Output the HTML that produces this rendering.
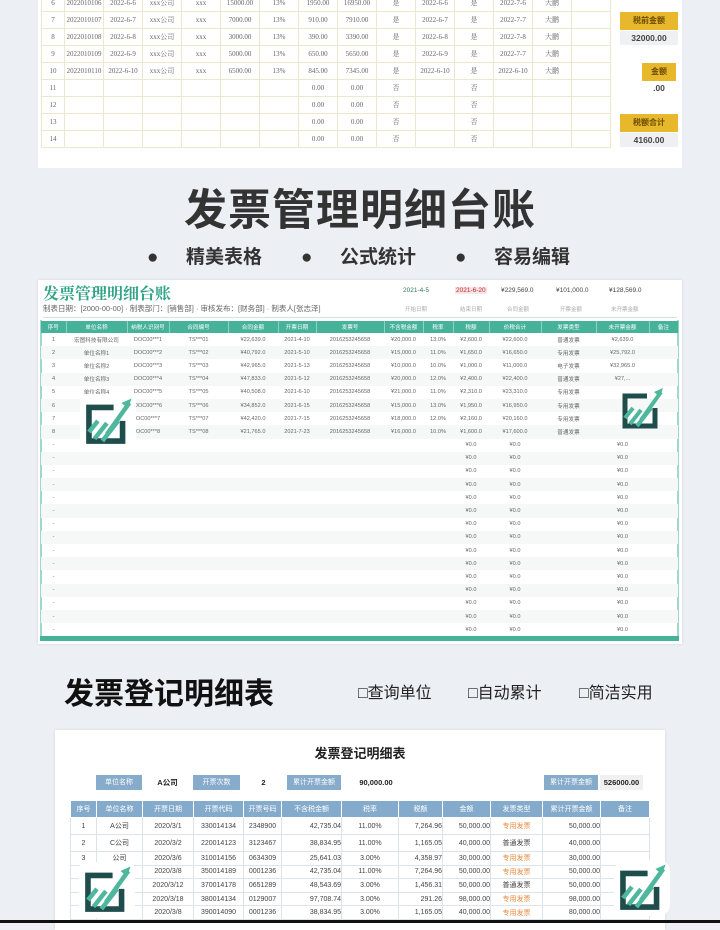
<!DOCTYPE html>
<html><head><meta charset="utf-8">
<style>
*{margin:0;padding:0;box-sizing:border-box}
body{width:720px;height:923px;overflow:hidden;background:#eceff3;font-family:"Liberation Sans","Noto Sans CJK SC",sans-serif;position:relative;color:#555}
.abs{position:absolute;white-space:nowrap}
table{border-collapse:collapse;table-layout:fixed;position:absolute}
td{overflow:hidden;white-space:nowrap;text-align:center}
.t1 td{height:17px;border:1px solid #ece8cf;font-size:7px;color:#666;font-family:"Liberation Serif","Noto Serif CJK SC",serif}
.t2 td{height:13.2px;font-size:5.6px;color:#666}
.t2 tr.h td{background:#46b29a;color:#fff;height:12px;border-right:1px solid #8fd3c5}
.t2 tr:nth-child(odd):not(.h) td{background:#f6f7f7}
.t3 td{font-size:7px;color:#444;border:1px solid #dde3ea;height:13.6px}
.t3 tr.h td{background:#85abcc;color:#fff;height:17px;border-color:#fff}
.t3 tr.r1 td{height:17px}
.t3 td.or{color:#e7893b}
.ylab{background:#e8b82c;color:#6a4b00;font-size:8px;font-weight:bold;text-align:center;line-height:18px}
.bl{background:#86abcb;color:#fff;font-size:7px;text-align:center;line-height:15px}
</style></head><body>

<div class="abs" style="left:38px;top:0;width:644px;height:168px;background:#fff"></div>
<table class="t1" style="left:41px;top:-6px;width:570px">
<colgroup><col style="width:23px"><col style="width:39px"><col style="width:39px"><col style="width:39px"><col style="width:39px"><col style="width:39px"><col style="width:39px"><col style="width:39px"><col style="width:39px"><col style="width:39px"><col style="width:39px"><col style="width:39px"><col style="width:39px"><col style="width:39px"><col style="width:39px"></colgroup>
<tr><td>6</td><td>2022010106</td><td>2022-6-6</td><td>xxx公司</td><td>xxx</td><td>15000.00</td><td>13%</td><td>1950.00</td><td>16950.00</td><td>是</td><td>2022-6-6</td><td>是</td><td>2022-7-6</td><td>大鹏</td><td></td></tr>
<tr><td>7</td><td>2022010107</td><td>2022-6-7</td><td>xxx公司</td><td>xxx</td><td>7000.00</td><td>13%</td><td>910.00</td><td>7910.00</td><td>是</td><td>2022-6-7</td><td>是</td><td>2022-7-7</td><td>大鹏</td><td></td></tr>
<tr><td>8</td><td>2022010108</td><td>2022-6-8</td><td>xxx公司</td><td>xxx</td><td>3000.00</td><td>13%</td><td>390.00</td><td>3390.00</td><td>是</td><td>2022-6-8</td><td>是</td><td>2022-7-8</td><td>大鹏</td><td></td></tr>
<tr><td>9</td><td>2022010109</td><td>2022-6-9</td><td>xxx公司</td><td>xxx</td><td>5000.00</td><td>13%</td><td>650.00</td><td>5650.00</td><td>是</td><td>2022-6-9</td><td>是</td><td>2022-7-7</td><td>大鹏</td><td></td></tr>
<tr><td>10</td><td>2022010110</td><td>2022-6-10</td><td>xxx公司</td><td>xxx</td><td>6500.00</td><td>13%</td><td>845.00</td><td>7345.00</td><td>是</td><td>2022-6-10</td><td>是</td><td>2022-6-10</td><td>大鹏</td><td></td></tr>
<tr><td>11</td><td></td><td></td><td></td><td></td><td></td><td></td><td>0.00</td><td>0.00</td><td>否</td><td></td><td>否</td><td></td><td></td><td></td></tr>
<tr><td>12</td><td></td><td></td><td></td><td></td><td></td><td></td><td>0.00</td><td>0.00</td><td>否</td><td></td><td>否</td><td></td><td></td><td></td></tr>
<tr><td>13</td><td></td><td></td><td></td><td></td><td></td><td></td><td>0.00</td><td>0.00</td><td>否</td><td></td><td>否</td><td></td><td></td><td></td></tr>
<tr><td>14</td><td></td><td></td><td></td><td></td><td></td><td></td><td>0.00</td><td>0.00</td><td>否</td><td></td><td>否</td><td></td><td></td><td></td></tr>
</table>
<div class="abs ylab" style="left:620px;top:12px;width:58px">税前金额</div>
<div class="abs" style="left:620px;top:31px;width:58px;height:14px;background:#eef0f2;font-size:8.5px;font-weight:bold;text-align:center;line-height:14px;color:#444">32000.00</div>
<div class="abs ylab" style="left:642px;top:63px;width:34px">金额</div>
<div class="abs" style="left:642px;top:83px;width:34px;font-size:8.5px;font-weight:bold;text-align:center;color:#444">.00</div>
<div class="abs ylab" style="left:620px;top:114px;width:58px">税额合计</div>
<div class="abs" style="left:620px;top:133px;width:58px;height:14px;background:#eef0f2;font-size:8.5px;font-weight:bold;text-align:center;line-height:14px;color:#444">4160.00</div>

<div class="abs" style="left:0;top:186px;width:720px;text-align:center;font-size:43px;font-weight:bold;color:#333;letter-spacing:1px;line-height:50px">发票管理明细台账</div>
<div class="abs" style="left:0;top:246px;width:720px;font-size:19px;font-weight:bold;color:#333;line-height:24px">
<span class="abs" style="left:147px">●</span><span class="abs" style="left:186px">精美表格</span>
<span class="abs" style="left:301px">●</span><span class="abs" style="left:340px">公式统计</span>
<span class="abs" style="left:455px">●</span><span class="abs" style="left:494px">容易编辑</span>
</div>

<div class="abs" style="left:38px;top:280px;width:644px;height:364px;background:#fff;box-shadow:0 0 3px rgba(0,0,0,.1)"></div>
<div class="abs" style="left:43px;top:283px;font-size:16px;font-weight:bold;color:#2fa487;font-family:'Noto Serif CJK SC',serif;line-height:20px">发票管理明细台账</div>
<div class="abs" style="left:43px;top:303px;font-size:7.5px;color:#666">制表日期：[2000-00-00] · 制表部门：[销售部] · 审核发布：[财务部] · 制表人[张志泽]</div>
<div class="abs" style="top:287px;left:0;width:720px;font-size:6.5px;color:#2a7a56">
<span class="abs" style="left:403px">2021-4-5</span>
<span class="abs" style="left:455px;color:#c4282b;background:#f7e4e4;padding:0 1px">2021-6-20</span>
<span class="abs" style="left:501px;color:#444">¥229,569.0</span>
<span class="abs" style="left:556px;color:#444">¥101,000.0</span>
<span class="abs" style="left:609px;color:#444">¥128,569.0</span>
</div>
<div class="abs" style="top:305px;left:0;width:720px;font-size:5.5px;color:#aaa">
<span class="abs" style="left:405px">开始日期</span><span class="abs" style="left:460px">结束日期</span><span class="abs" style="left:507px">合同金额</span><span class="abs" style="left:560px">开票金额</span><span class="abs" style="left:611px">未开票金额</span>
</div>
<div class="abs" style="left:43px;top:317px;width:634px;height:1px;background:#cfe7e1"></div>
<div class="abs" style="left:40px;top:320px;width:2px;height:320px;background:#9fd9cc"></div>
<div class="abs" style="left:677px;top:320px;width:2px;height:320px;background:#9fd9cc"></div>
<table class="t2" style="left:41px;top:321px;width:637px">
<colgroup><col style="width:25px"><col style="width:61px"><col style="width:42px"><col style="width:59px"><col style="width:50px"><col style="width:38px"><col style="width:68px"><col style="width:39px"><col style="width:30px"><col style="width:36px"><col style="width:52px"><col style="width:55px"><col style="width:53px"><col style="width:29px"></colgroup>
<tr class="h"><td>序号</td><td>单位名称</td><td>纳税人识别号</td><td>合同编号</td><td>合同金额</td><td>开票日期</td><td>发票号</td><td>不含税金额</td><td>税率</td><td>税额</td><td>价税合计</td><td>发票类型</td><td>未开票金额</td><td>备注</td></tr>
<tr><td>1</td><td>宏图科技有限公司</td><td>DOC00***1</td><td>TS***01</td><td>¥22,639.0</td><td>2021-4-10</td><td>2016253245658</td><td>¥20,000.0</td><td>13.0%</td><td>¥2,600.0</td><td>¥22,600.0</td><td>普通发票</td><td>¥2,639.0</td><td></td></tr>
<tr><td>2</td><td>单位名称1</td><td>DOC00***2</td><td>TS***02</td><td>¥40,792.0</td><td>2021-5-10</td><td>2016253245658</td><td>¥15,000.0</td><td>11.0%</td><td>¥1,650.0</td><td>¥16,650.0</td><td>专用发票</td><td>¥25,792.0</td><td></td></tr>
<tr><td>3</td><td>单位名称2</td><td>DOC00***3</td><td>TS***03</td><td>¥42,965.0</td><td>2021-5-13</td><td>2016253245658</td><td>¥10,000.0</td><td>10.0%</td><td>¥1,000.0</td><td>¥11,000.0</td><td>电子发票</td><td>¥32,965.0</td><td></td></tr>
<tr><td>4</td><td>单位名称3</td><td>DOC00***4</td><td>TS***04</td><td>¥47,833.0</td><td>2021-5-12</td><td>2016253245658</td><td>¥20,000.0</td><td>12.0%</td><td>¥2,400.0</td><td>¥22,400.0</td><td>普通发票</td><td>¥27,...</td><td></td></tr>
<tr><td>5</td><td>单位名称4</td><td>DOC00***5</td><td>TS***05</td><td>¥40,508.0</td><td>2021-6-10</td><td>2016253245658</td><td>¥21,000.0</td><td>11.0%</td><td>¥2,310.0</td><td>¥23,310.0</td><td>专用发票</td><td></td><td></td></tr>
<tr><td>6</td><td></td><td>DOC00***6</td><td>TS***06</td><td>¥34,852.0</td><td>2021-6-15</td><td>2016253245658</td><td>¥15,000.0</td><td>13.0%</td><td>¥1,950.0</td><td>¥16,950.0</td><td>专用发票</td><td></td><td></td></tr>
<tr><td>7</td><td></td><td>OC00***7</td><td>TS***07</td><td>¥42,420.0</td><td>2021-7-15</td><td>2016253245658</td><td>¥18,000.0</td><td>12.0%</td><td>¥2,160.0</td><td>¥20,160.0</td><td>专用发票</td><td></td><td></td></tr>
<tr><td>8</td><td></td><td>OC00***8</td><td>TS***08</td><td>¥21,765.0</td><td>2021-7-23</td><td>2016253245658</td><td>¥16,000.0</td><td>10.0%</td><td>¥1,600.0</td><td>¥17,600.0</td><td>普通发票</td><td></td><td></td></tr>
<tr><td>-</td><td></td><td></td><td></td><td></td><td></td><td></td><td></td><td></td><td>¥0.0</td><td>¥0.0</td><td></td><td>¥0.0</td><td></td></tr>
<tr><td>-</td><td></td><td></td><td></td><td></td><td></td><td></td><td></td><td></td><td>¥0.0</td><td>¥0.0</td><td></td><td>¥0.0</td><td></td></tr>
<tr><td>-</td><td></td><td></td><td></td><td></td><td></td><td></td><td></td><td></td><td>¥0.0</td><td>¥0.0</td><td></td><td>¥0.0</td><td></td></tr>
<tr><td>-</td><td></td><td></td><td></td><td></td><td></td><td></td><td></td><td></td><td>¥0.0</td><td>¥0.0</td><td></td><td>¥0.0</td><td></td></tr>
<tr><td>-</td><td></td><td></td><td></td><td></td><td></td><td></td><td></td><td></td><td>¥0.0</td><td>¥0.0</td><td></td><td>¥0.0</td><td></td></tr>
<tr><td>-</td><td></td><td></td><td></td><td></td><td></td><td></td><td></td><td></td><td>¥0.0</td><td>¥0.0</td><td></td><td>¥0.0</td><td></td></tr>
<tr><td>-</td><td></td><td></td><td></td><td></td><td></td><td></td><td></td><td></td><td>¥0.0</td><td>¥0.0</td><td></td><td>¥0.0</td><td></td></tr>
<tr><td>-</td><td></td><td></td><td></td><td></td><td></td><td></td><td></td><td></td><td>¥0.0</td><td>¥0.0</td><td></td><td>¥0.0</td><td></td></tr>
<tr><td>-</td><td></td><td></td><td></td><td></td><td></td><td></td><td></td><td></td><td>¥0.0</td><td>¥0.0</td><td></td><td>¥0.0</td><td></td></tr>
<tr><td>-</td><td></td><td></td><td></td><td></td><td></td><td></td><td></td><td></td><td>¥0.0</td><td>¥0.0</td><td></td><td>¥0.0</td><td></td></tr>
<tr><td>-</td><td></td><td></td><td></td><td></td><td></td><td></td><td></td><td></td><td>¥0.0</td><td>¥0.0</td><td></td><td>¥0.0</td><td></td></tr>
<tr><td>-</td><td></td><td></td><td></td><td></td><td></td><td></td><td></td><td></td><td>¥0.0</td><td>¥0.0</td><td></td><td>¥0.0</td><td></td></tr>
<tr><td>-</td><td></td><td></td><td></td><td></td><td></td><td></td><td></td><td></td><td>¥0.0</td><td>¥0.0</td><td></td><td>¥0.0</td><td></td></tr>
<tr><td>-</td><td></td><td></td><td></td><td></td><td></td><td></td><td></td><td></td><td>¥0.0</td><td>¥0.0</td><td></td><td>¥0.0</td><td></td></tr>
<tr><td>-</td><td></td><td></td><td></td><td></td><td></td><td></td><td></td><td></td><td>¥0.0</td><td>¥0.0</td><td></td><td>¥0.0</td><td></td></tr>
</table>
<div class="abs" style="left:40px;top:636px;width:639px;height:5px;background:#46b29a"></div>

<svg class="abs" style="left:80px;top:394px" width="56" height="56" viewBox="0 0 50 50"><rect x="0" y="0" width="50" height="50" rx="6" fill="#fff" opacity=".9"/><path d="M30 12H8v30h30V24" fill="none" stroke="#1e4d4b" stroke-width="5"/><path d="M8 34l8-10M13 40l11-14M20 42l14-18" stroke="#4fb79d" stroke-width="4"/><path d="M24 36L44 8" stroke="#4fb79d" stroke-width="4"/><path d="M46 4l-9 4 6 5z" fill="#4fb79d"/></svg>
<svg class="abs" style="left:616px;top:384px" width="52" height="50" viewBox="0 0 50 50"><path d="M30 12H8v30h30V24" fill="none" stroke="#1e4d4b" stroke-width="5"/><path d="M8 34l8-10M13 40l11-14M20 42l14-18" stroke="#4fb79d" stroke-width="4"/><path d="M24 36L44 8" stroke="#4fb79d" stroke-width="4"/><path d="M46 4l-9 4 6 5z" fill="#4fb79d"/></svg>

<div class="abs" style="left:64px;top:676px;font-size:30px;font-weight:bold;color:#111;line-height:38px">发票登记明细表</div>
<div class="abs" style="left:0;top:684px;width:720px;font-size:16px;color:#222;line-height:20px">
<span class="abs" style="left:358px"><b>□</b>查询单位</span>
<span class="abs" style="left:468px"><b>□</b>自动累计</span>
<span class="abs" style="left:579px"><b>□</b>简洁实用</span>
</div>

<div class="abs" style="left:55px;top:730px;width:610px;height:200px;background:#fff;box-shadow:0 0 3px rgba(0,0,0,.1)"></div>
<div class="abs" style="left:0;top:743px;width:720px;text-align:center;font-size:13px;font-weight:bold;color:#222">发票登记明细表</div>
<div class="abs bl" style="left:96px;top:775px;width:46px">单位名称</div>
<div class="abs" style="left:142px;top:775px;width:51px;font-size:7.5px;font-weight:bold;text-align:center;line-height:15px;color:#222">A公司</div>
<div class="abs bl" style="left:193px;top:775px;width:47px">开票次数</div>
<div class="abs" style="left:240px;top:775px;width:47px;font-size:7.5px;font-weight:bold;text-align:center;line-height:15px;color:#222">2</div>
<div class="abs bl" style="left:287px;top:775px;width:54px">累计开票金额</div>
<div class="abs" style="left:351px;top:775px;width:50px;font-size:7.5px;font-weight:bold;text-align:center;line-height:15px;color:#222">90,000.00</div>
<div class="abs bl" style="left:544px;top:775px;width:54px">累计开票金额</div>
<div class="abs" style="left:600px;top:775px;width:43px;background:#f0f0f0;font-size:7.5px;font-weight:bold;text-align:center;line-height:15px;color:#222">526000.00</div>
<table class="t3" style="left:70px;top:800px;width:579px">
<colgroup><col style="width:26px"><col style="width:46px"><col style="width:51px"><col style="width:50px"><col style="width:38px"><col style="width:60px"><col style="width:57px"><col style="width:44px"><col style="width:48px"><col style="width:52px"><col style="width:58px"><col style="width:49px"></colgroup>
<tr class="h"><td>序号</td><td>单位名称</td><td>开票日期</td><td>开票代码</td><td>开票号码</td><td>不含税金额</td><td>税率</td><td>税额</td><td>金额</td><td>发票类型</td><td>累计开票金额</td><td>备注</td></tr>
<tr class="r1"><td>1</td><td>A公司</td><td>2020/3/1</td><td>330014134</td><td>2348900</td><td style="text-align:right">42,735.04</td><td>11.00%</td><td style="text-align:right">7,264.96</td><td style="text-align:right">50,000.00</td><td class="or">专用发票</td><td style="text-align:right">50,000.00</td><td></td></tr>
<tr class="r1"><td>2</td><td>C公司</td><td>2020/3/2</td><td>220014123</td><td>3123467</td><td style="text-align:right">38,834.95</td><td>11.00%</td><td style="text-align:right">1,165.05</td><td style="text-align:right">40,000.00</td><td>普通发票</td><td style="text-align:right">40,000.00</td><td></td></tr>
<tr><td>3</td><td>公司</td><td>2020/3/6</td><td>310014156</td><td>0634309</td><td style="text-align:right">25,641.03</td><td>3.00%</td><td style="text-align:right">4,358.97</td><td style="text-align:right">30,000.00</td><td class="or">专用发票</td><td style="text-align:right">30,000.00</td><td></td></tr>
<tr><td></td><td></td><td>2020/3/8</td><td>350014189</td><td>0001236</td><td style="text-align:right">42,735.04</td><td>11.00%</td><td style="text-align:right">7,264.96</td><td style="text-align:right">50,000.00</td><td class="or">专用发票</td><td style="text-align:right">50,000.00</td><td></td></tr>
<tr><td></td><td></td><td>2020/3/12</td><td>370014178</td><td>0651289</td><td style="text-align:right">48,543.69</td><td>3.00%</td><td style="text-align:right">1,456.31</td><td style="text-align:right">50,000.00</td><td>普通发票</td><td style="text-align:right">50,000.00</td><td></td></tr>
<tr><td></td><td></td><td>2020/3/18</td><td>380014134</td><td>0129007</td><td style="text-align:right">97,708.74</td><td>3.00%</td><td style="text-align:right">291.26</td><td style="text-align:right">98,000.00</td><td class="or">专用发票</td><td style="text-align:right">98,000.00</td><td></td></tr>
<tr><td></td><td></td><td>2020/3/8</td><td>390014090</td><td>0001236</td><td style="text-align:right">38,834.95</td><td>3.00%</td><td style="text-align:right">1,165.05</td><td style="text-align:right">40,000.00</td><td class="or">专用发票</td><td style="text-align:right">80,000.00</td><td></td></tr>
</table>
<svg class="abs" style="left:76px;top:862px" width="62" height="56" viewBox="0 0 50 50"><rect x="0" y="0" width="50" height="50" rx="6" fill="#fff"/><path d="M30 12H8v30h30V24" fill="none" stroke="#1e4d4b" stroke-width="5"/><path d="M8 34l8-10M13 40l11-14M20 42l14-18" stroke="#4fb79d" stroke-width="4"/><path d="M24 36L44 8" stroke="#4fb79d" stroke-width="4"/><path d="M46 4l-9 4 6 5z" fill="#4fb79d"/></svg>
<svg class="abs" style="left:612px;top:860px" width="60" height="56" viewBox="0 0 50 50"><rect x="0" y="0" width="50" height="50" rx="10" fill="#fff"/><path d="M30 12H8v30h30V24" fill="none" stroke="#1e4d4b" stroke-width="5"/><path d="M8 34l8-10M13 40l11-14M20 42l14-18" stroke="#4fb79d" stroke-width="4"/><path d="M24 36L44 8" stroke="#4fb79d" stroke-width="4"/><path d="M46 4l-9 4 6 5z" fill="#4fb79d"/></svg>
<div class="abs" style="left:0;top:920px;width:720px;height:3px;background:#111"></div>
</body></html>
